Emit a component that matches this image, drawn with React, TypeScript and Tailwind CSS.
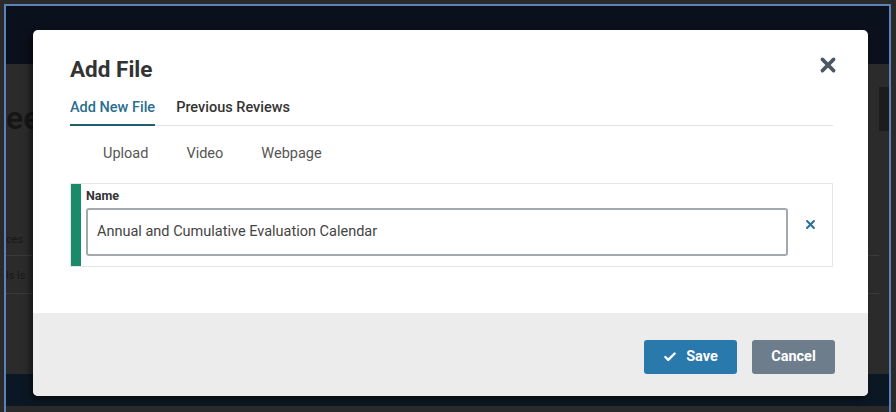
import { Check } from "lucide-react";

const font = { fontFamily: "Roboto, 'Liberation Sans', sans-serif" };

function CloseIcon({ size, color, stroke }: { size: number; color: string; stroke: number }) {
  return (
    <svg width={size} height={size} viewBox="0 0 16 16" fill="none">
      <path d="M3 3 L13 13 M13 3 L3 13" stroke={color} strokeWidth={stroke} strokeLinecap="round" />
    </svg>
  );
}

// the page that sits dimmed behind the dialog
function BackgroundPage() {
  return (
    <div className="w-full h-full flex flex-col bg-[#2b2b2b]">
      <div className="h-[58px] bg-[#0a101c]" />
      <div className="flex-1 flex">
        <div className="flex-1 flex flex-col pt-[38px]">
          <div className="text-[32px] font-semibold text-[#161616] leading-none" style={font}>
            ee
          </div>
          <div className="mt-[100px] text-[11px] text-[#181818] leading-none">ces</div>
          <div className="mt-[10px] h-px bg-[#3a3a3a]" />
          <div className="mt-[14px] text-[11px] text-[#181818] leading-none">ls ls</div>
          <div className="mt-[12px] h-px bg-[#3a3a3a]" />
        </div>
        <div className="w-[10px] flex flex-col pt-[23px]">
          <div className="h-[44px] bg-[#1c1c1c]" />
        </div>
      </div>
      <div className="h-[32px] bg-[#0b1824]" />
      <div className="h-[18px] bg-[#2a2a2a]" />
    </div>
  );
}

export default function App() {
  return (
    <div className="relative w-[896px] h-[412px] overflow-hidden bg-[#2a2a2a]" style={font}>
      <div className="absolute left-[4px] top-[4px] w-[887px] h-[420px] border-l-2 border-t-2 border-r-2 border-[#5b82bd] overflow-hidden">
        <BackgroundPage />
      </div>

      {/* dialog */}
      <div className="absolute left-[33px] top-[30px] w-[835px] h-[366px] rounded-[5px] bg-white flex flex-col overflow-hidden shadow-[-3px_4px_6px_rgba(0,0,0,0.5)]">
        <div className="flex-1 flex flex-col px-[37px] pt-[24px]">
          <div className="flex items-start justify-between">
            <h2 className="text-[22.5px] font-bold text-[#333] leading-none mt-[4px]">Add File</h2>
            <button className="mt-[2px] mr-[-6px]">
              <CloseIcon size={18} color="#4b5864" stroke={3.2} />
            </button>
          </div>

          <div className="mt-[16px] flex items-end border-b border-[#e2e2e2] mr-[-2px]">
            <div className="pb-[6px] border-b-2 border-[#235d72] mb-[-1px] text-[14.5px] font-medium text-[#2b6e8e]">
              Add New File
            </div>
            <div className="pb-[7px] ml-[21px] text-[14.5px] font-medium text-[#333]">Previous Reviews</div>
          </div>

          <div className="mt-[17px] pl-[33px] flex gap-[38px] text-[14.5px] text-[#555]">
            <span>Upload</span>
            <span>Video</span>
            <span>Webpage</span>
          </div>

          <div className="mt-[18px] h-[84px] flex border border-[#e6e6e6] mr-[-2px]">
            <div className="w-[10px] bg-[#1b8a6b]" />
            <div className="flex-1 flex items-end pl-[5px] pb-[10px]">
              <div className="flex-1 flex flex-col">
                <label className="text-[12.5px] font-bold text-[#333] leading-none mb-[6px]">Name</label>
                <div className="h-[48px] flex items-center rounded-[3px] border-2 border-[#a3a8ad] pl-[9px] text-[14.5px] text-[#444]">
                  Annual and Cumulative Evaluation Calendar
                </div>
              </div>
              <button className="w-[44px] h-[20px] flex items-center justify-center self-center mt-[8px]">
                <CloseIcon size={11} color="#2d6f98" stroke={3} />
              </button>
            </div>
          </div>
        </div>

        <div className="h-[83px] bg-[#ececec] flex items-center justify-end gap-[15px] pr-[33px] pt-[5px]">
          <button className="h-[34px] w-[93px] rounded-[3px] bg-[#2a79ad] text-white text-[14.5px] font-bold flex items-center justify-center gap-[9px]">
            <Check size={14} strokeWidth={4} />
            Save
          </button>
          <button className="h-[34px] w-[83px] rounded-[3px] bg-[#6d7d8b] text-white text-[14.5px] font-bold flex items-center justify-center">
            Cancel
          </button>
        </div>
      </div>
    </div>
  );
}
